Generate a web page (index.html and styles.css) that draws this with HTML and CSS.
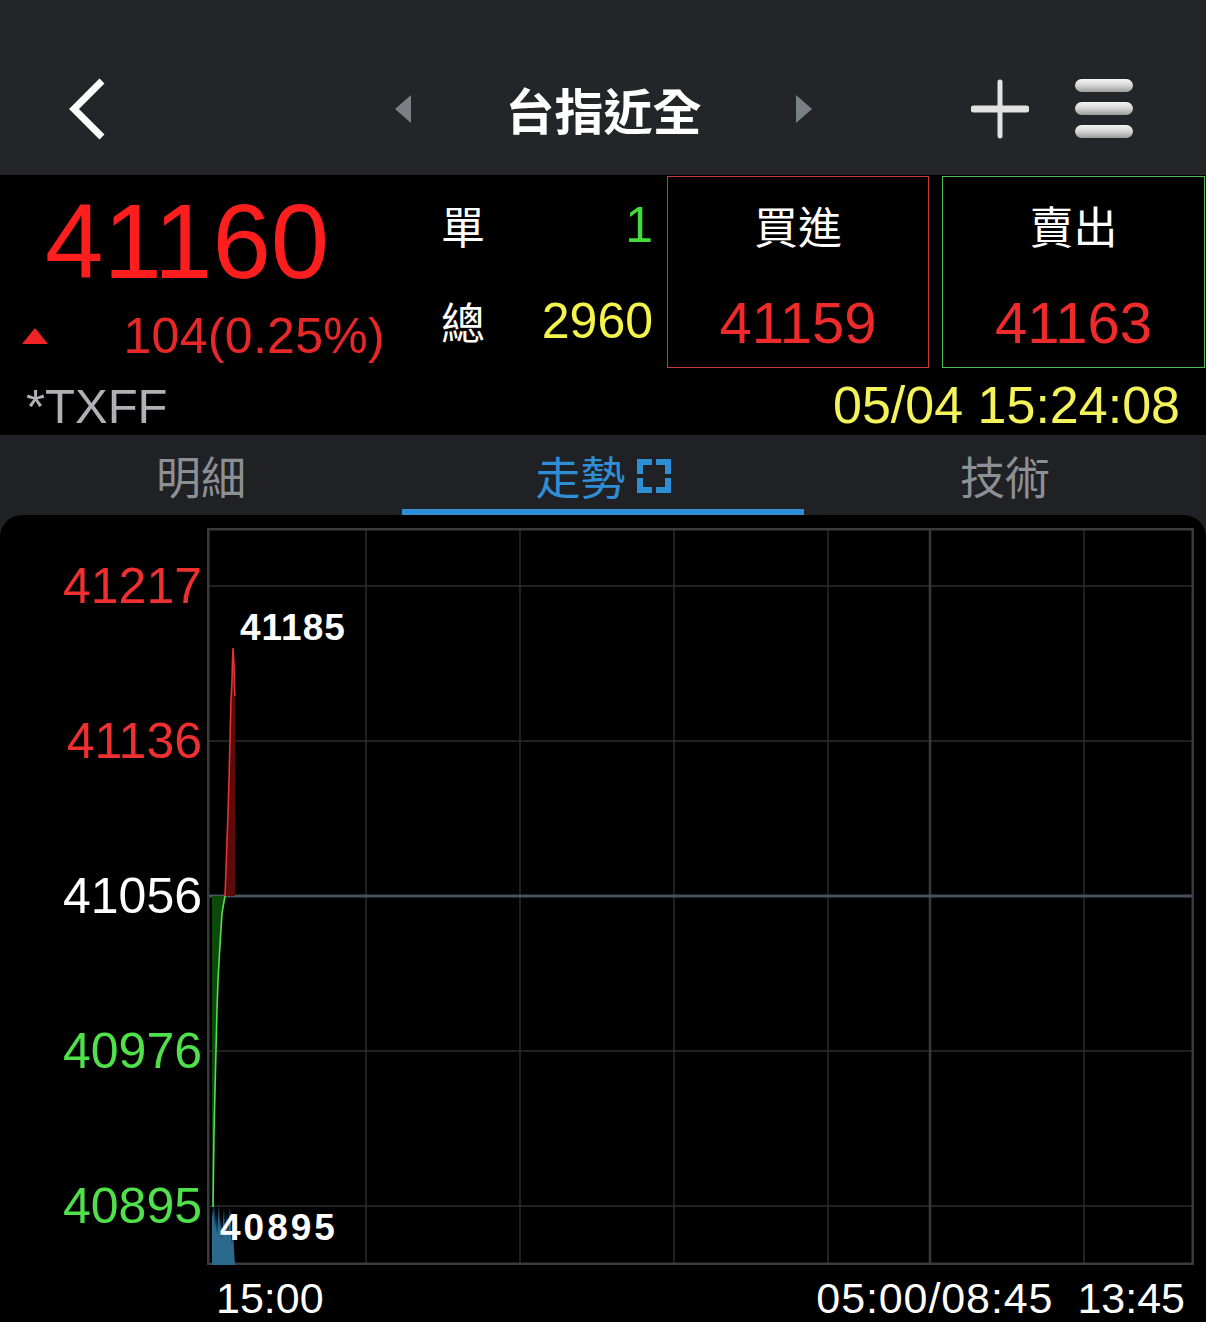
FILE: index.html
```html
<!DOCTYPE html>
<html lang="zh-Hant">
<head>
<meta charset="utf-8">
<title>台指近全</title>
<link rel="stylesheet" href="styles.css">
</head>
<body>
<div class="app">
  <header class="topbar">
    <svg class="back" viewBox="0 0 44 64" width="44" height="64">
      <polyline points="36,4 8,32 36,60" fill="none" stroke="#ffffff" stroke-width="7" stroke-linecap="butt" stroke-linejoin="miter"/>
    </svg>
    <div class="switcher">
      <span class="tri tri-left"></span>
      <h1 class="title">台指近全</h1>
      <span class="tri tri-right"></span>
    </div>
    <svg class="plus" viewBox="0 0 58 60" width="58" height="60">
      <line x1="29" y1="3" x2="29" y2="57" stroke="#e2e2e2" stroke-width="5" stroke-linecap="round"/>
      <line x1="3" y1="30" x2="55" y2="30" stroke="#e2e2e2" stroke-width="7" stroke-linecap="round"/>
    </svg>
    <div class="menu"><span></span><span></span><span></span></div>
  </header>

  <section class="quote">
    <div class="quote-top">
      <div class="last">
        <div class="last-price">41160</div>
        <div class="change">
          <span class="up-tri"></span>
          <span class="change-val">104(0.25%)</span>
        </div>
      </div>
      <div class="vol">
        <div class="vol-row"><span class="vol-label">單</span><span class="vol-val green">1</span></div>
        <div class="vol-row"><span class="vol-label">總</span><span class="vol-val yellow">2960</span></div>
      </div>
      <div class="bidask bid">
        <div class="ba-title">買進</div>
        <div class="ba-price">41159</div>
      </div>
      <div class="bidask ask">
        <div class="ba-title">賣出</div>
        <div class="ba-price">41163</div>
      </div>
    </div>
    <div class="quote-bottom">
      <span class="symbol">*TXFF</span>
      <span class="stamp">05/04 15:24:08</span>
    </div>
  </section>

  <nav class="tabs">
    <div class="tab">明細</div>
    <div class="tab active">走勢
      <svg class="expand" viewBox="0 0 34 34" width="34" height="34">
        <path d="M3 15 V3 H15 M19 3 H31 V15 M31 19 V31 H19 M15 31 H3 V19" fill="none" stroke="#2f8fd6" stroke-width="6"/>
      </svg>
    </div>
    <div class="tab">技術</div>
  </nav>

  <section class="chart">
    <div class="chart-body">
      <div class="y-axis">
        <span class="ylab red">41217</span>
        <span class="ylab red">41136</span>
        <span class="ylab white">41056</span>
        <span class="ylab green">40976</span>
        <span class="ylab green">40895</span>
      </div>
      <svg class="plot" viewBox="0 0 987 737" width="987" height="737">
        <g class="grid">
          <line x1="0" y1="58" x2="987" y2="58"/>
          <line x1="0" y1="213" x2="987" y2="213"/>
          <line x1="0" y1="523" x2="987" y2="523"/>
          <line x1="0" y1="678" x2="987" y2="678"/>
          <line x1="159" y1="0" x2="159" y2="737"/>
          <line x1="313" y1="0" x2="313" y2="737"/>
          <line x1="467" y1="0" x2="467" y2="737"/>
          <line x1="621" y1="0" x2="621" y2="737"/>
          <line x1="877" y1="0" x2="877" y2="737"/>
        </g>
        <line class="session" x1="723" y1="0" x2="723" y2="737"/>
        <line class="ref" x1="0" y1="368" x2="987" y2="368"/>
        <rect class="frame" x="1.25" y="1.25" width="984.5" height="734.5"/>
        <polygon class="volume" points="5,737 5,680 6,690 7,672 8,700 9,684 10,706 11,690 12,676 13,702 14,688 15,712 16,694 17,680 18,704 19,698 20,686 21,710 22,692 23,678 24,706 25,716 26,700 27,722 28,737"/>
        <polygon class="fill-down" points="5,368 5,679 6,679 6.5,642 7,605 8,562 9,522 10,482 11,452 13,417 15,385 18,368"/>
        <polyline class="line-down" points="6,679 6.5,642 7,605 8,562 9,522 10,482 11,452 13,417 15,385 18,368"/>
        <polygon class="fill-up" points="18,368 19,342 20,312 21,285 22,252 23,212 24,172 25,152 25.5,132 26,120 27,137 27.5,162 28,168 28,368"/>
        <polyline class="line-up" points="18,368 19,342 20,312 21,285 22,252 23,212 24,172 25,152 25.5,132 26,120 27,137 27.5,162 28,168"/>
        <text class="mark mark-high" x="33" y="112">41185</text>
        <text class="mark mark-low" x="13" y="712">40895</text>
      </svg>
    </div>
    <div class="x-axis">
      <span class="xlab">15:00</span>
      <span class="xlab push">05:00/08:45</span>
      <span class="xlab last-x">13:45</span>
    </div>
  </section>
</div>
</body>
</html>
```
FILE: styles.css
```css
* {
  box-sizing: border-box;
}

html, body {
  margin: 0;
  padding: 0;
  background: #000;
}

body {
  font-family: "Liberation Sans", "Noto Sans CJK TC", sans-serif;
  color: #fff;
}

.app {
  width: 1206px;
  height: 1322px;
  overflow: hidden;
  background: #000;
}

/* ---------- top bar ---------- */
.topbar {
  height: 175px;
  padding-top: 42px;
  background: #232528;
  display: flex;
  align-items: center;
}

.back {
  margin-left: 66px;
  flex: none;
}

.switcher {
  display: flex;
  align-items: center;
  margin-left: 285px;
}

.tri {
  width: 0;
  height: 0;
  border-top: 14px solid transparent;
  border-bottom: 14px solid transparent;
  flex: none;
}

.tri-left {
  border-right: 16px solid #7b8085;
}

.tri-right {
  border-left: 16px solid #7b8085;
}

.title {
  margin: 0;
  width: 385px;
  text-align: center;
  font-family: "Noto Sans CJK TC", sans-serif;
  font-size: 49px;
  font-weight: 700;
  line-height: 60px;
  color: #fff;
}

.plus {
  margin-left: 159px;
  flex: none;
}

.menu {
  margin-left: 46px;
  width: 58px;
  display: flex;
  flex-direction: column;
  gap: 10px;
}

.menu span {
  display: block;
  height: 13px;
  border-radius: 7px;
  background: linear-gradient(#f4f4f4 0%, #d8d8d8 45%, #9c9c9c 100%);
}

/* ---------- quote ---------- */
.quote {
  height: 260px;
  background: #000;
}

.quote-top {
  display: flex;
  height: 195px;
}

.last {
  width: 430px;
  flex: none;
}

.last-price {
  margin-top: 14px;
  padding-left: 45px;
  font-size: 105px;
  line-height: 105px;
  color: #ff1e1e;
}

.change {
  margin-top: 17px;
  margin-left: 22px;
  width: 363px;
  height: 50px;
  display: flex;
  align-items: center;
  justify-content: space-between;
}

.up-tri {
  width: 0;
  height: 0;
  border-left: 13px solid transparent;
  border-right: 13px solid transparent;
  border-bottom: 16px solid #f02424;
}

.change-val {
  font-size: 50px;
  line-height: 50px;
  letter-spacing: 0.3px;
  color: #e82828;
}

.vol {
  margin-left: 11px;
  width: 212px;
  flex: none;
  padding-top: 25px;
  display: flex;
  flex-direction: column;
  gap: 46px;
}

.vol-row {
  height: 50px;
  display: flex;
  align-items: center;
  justify-content: space-between;
}

.vol-label {
  font-family: "Noto Sans CJK TC", sans-serif;
  font-size: 44px;
  line-height: 50px;
  color: #fff;
}

.vol-val {
  font-size: 50px;
  line-height: 50px;
}

.green {
  color: #44dd3c;
}

.yellow {
  color: #f4f44a;
}

.bidask {
  margin-top: 1px;
  height: 192px;
  flex: none;
  text-align: center;
  padding-top: 23px;
}

.bid {
  margin-left: 14px;
  width: 262px;
  border: 1.5px solid #c83a3a;
}

.ask {
  margin-left: 13px;
  width: 263px;
  border: 1.5px solid #4cbf4c;
}

.ba-title {
  font-family: "Noto Sans CJK TC", sans-serif;
  font-size: 44px;
  line-height: 50px;
  color: #fff;
}

.ba-price {
  margin-top: 44px;
  font-size: 58px;
  line-height: 58px;
  color: #ee2a2a;
}

.quote-bottom {
  height: 65px;
  padding: 9px 26px 0 26px;
  display: flex;
  align-items: baseline;
  justify-content: space-between;
}

.symbol {
  font-size: 49px;
  line-height: 52px;
  color: #aeb2b6;
}

.stamp {
  font-size: 52px;
  line-height: 52px;
  color: #f4f45a;
}

/* ---------- tabs ---------- */
.tabs {
  height: 80px;
  background: #1f2125;
  display: flex;
}

.tab {
  flex: 1;
  padding-top: 8px;
  border-bottom: 6px solid transparent;
  display: flex;
  align-items: center;
  justify-content: center;
  gap: 11px;
  font-family: "Noto Sans CJK TC", sans-serif;
  font-size: 45px;
  line-height: 60px;
  color: #8c9094;
}

.tab.active {
  color: #2f8fd6;
  border-bottom-color: #2f8fd6;
}

.expand {
  flex: none;
}

/* ---------- chart ---------- */
.chart {
  height: 807px;
  background: #1f2125;
}

.chart-body,
.x-axis {
  background: #000;
}

.chart-body {
  border-radius: 22px 22px 0 0;
  padding-top: 13px;
  display: flex;
}

.y-axis {
  width: 207px;
  flex: none;
  padding-top: 33px;
  padding-right: 5px;
  display: flex;
  flex-direction: column;
  align-items: flex-end;
  gap: 105px;
}

.ylab {
  font-size: 50px;
  line-height: 50px;
}

.ylab.red {
  color: #f03030;
}

.ylab.white {
  color: #ffffff;
}

.ylab.green {
  color: #4fe04a;
}

.plot {
  display: block;
  flex: none;
}

.grid line {
  stroke: #2c2c2c;
  stroke-width: 1.5;
}

.session {
  stroke: #3a3a3a;
  stroke-width: 2.5;
}

.ref {
  stroke: #46525c;
  stroke-width: 3;
}

.frame {
  fill: none;
  stroke: #3b3b3b;
  stroke-width: 2.5;
}

.volume {
  fill: #2b6a8c;
}

.fill-down {
  fill: #0c4a0c;
}

.line-down {
  fill: none;
  stroke: #54e048;
  stroke-width: 1.6;
}

.fill-up {
  fill: #5c0a0a;
}

.line-up {
  fill: none;
  stroke: #e43232;
  stroke-width: 1.6;
}

.mark {
  font-family: "Liberation Sans", sans-serif;
  font-size: 37px;
  font-weight: 700;
  fill: #ffffff;
}

.mark-high {
  letter-spacing: 1px;
}

.mark-low {
  letter-spacing: 3px;
}

.x-axis {
  height: 57px;
  padding: 12px 21px 0 216px;
  display: flex;
  align-items: baseline;
}

.xlab {
  font-size: 43px;
  line-height: 43px;
  color: #fff;
}

.push {
  margin-left: auto;
  letter-spacing: 0.9px;
}

.last-x {
  margin-left: 24px;
}
```
